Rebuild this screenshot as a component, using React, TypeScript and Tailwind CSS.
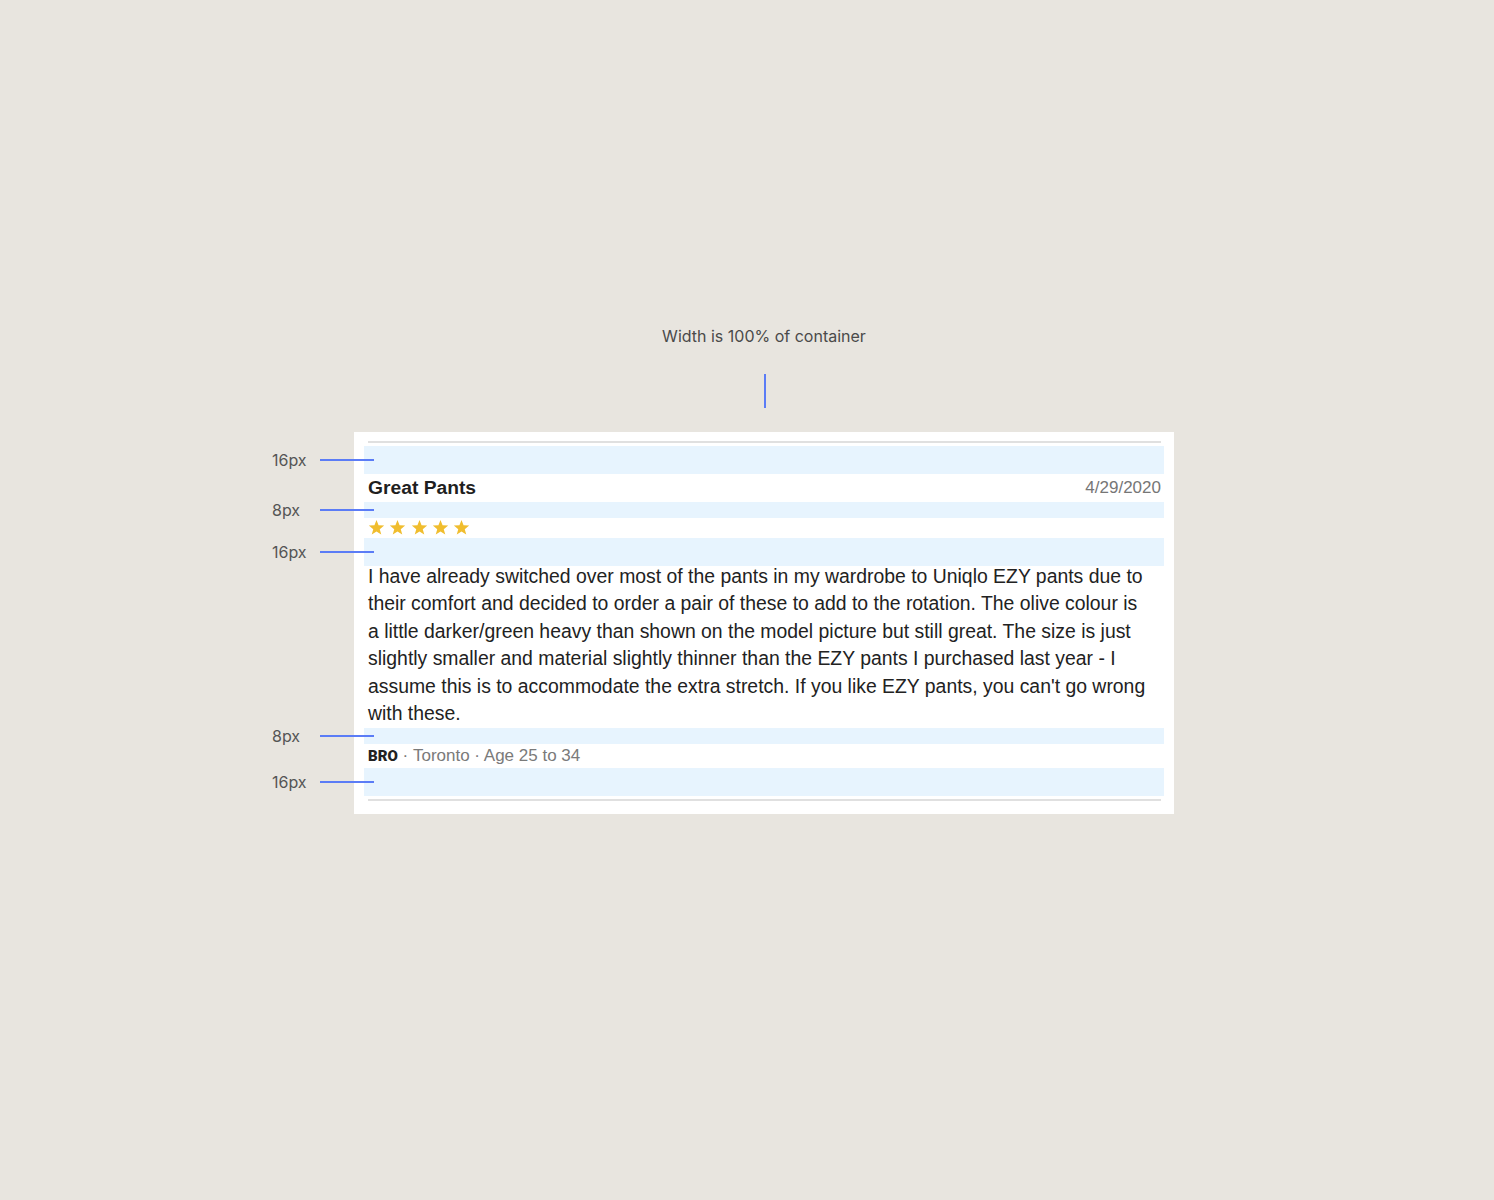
import React from "react";

function Band({ h, label }: { h: string; label: string }) {
  return (
    <div className={`relative ml-[-4px] mr-[-3px] ${h} bg-[#e7f4fe]`}>
      <div className="absolute left-[-92px] top-1/2 flex -translate-y-1/2 items-center">
        <span className="w-[48px] font-['Inter',sans-serif] text-[16px] leading-[20px] text-[#555]">{label}</span>
        <span className="block h-[2px] w-[54px] bg-[#5b7cf6]" />
      </div>
    </div>
  );
}

function Star() {
  return (
    <svg width="17" height="17" viewBox="0 0 24 24" className="block">
      <polygon
        points="12,1.5 14.9,8.9 22.8,9.3 16.6,14.3 18.7,22 12,17.6 5.3,22 7.4,14.3 1.2,9.3 9.1,8.9"
        fill="#f0bd2e"
      />
    </svg>
  );
}

export default function App() {
  return (
    <div className="min-h-[1200px] w-full bg-[#e8e5df] pl-[354px] pt-[326px] font-['Liberation_Sans',Arial,sans-serif]">
      <div className="flex w-[820px] flex-col items-center">
        <div className="font-['Inter',sans-serif] text-[16px] leading-[20px] text-[#4a4a4a]">
          Width is 100% of container
        </div>
        <div className="ml-[2px] mt-[28px] h-[34px] w-[2px] bg-[#5b7cf6]" />
        <div className="mt-[24px] w-full bg-white pb-[13px] pl-[14px] pr-[13px] pt-[9px]">
          <div className="h-[2px] bg-[#e0e0e0]" />
          <div className="mt-[3px]">
            <Band h="h-[28px]" label="16px" />
            <div className="flex h-[28px] items-center justify-between">
              <span className="text-[19.25px] font-bold text-[#1f1f1f]">Great Pants</span>
              <span className="text-[17px] text-[#767676]">4/29/2020</span>
            </div>
            <Band h="h-[16px]" label="8px" />
            <div className="flex h-[20px] items-start gap-[4.3px] pt-[1px]">
              <Star />
              <Star />
              <Star />
              <Star />
              <Star />
            </div>
            <Band h="h-[28px]" label="16px" />
            <div className="h-[162px]">
              <p className="relative -top-[3px] whitespace-nowrap text-[19.4px] leading-[27.4px] text-[#222]">
                I have already switched over most of the pants in my wardrobe to Uniqlo EZY pants due to
                <br />
                their comfort and decided to order a pair of these to add to the rotation. The olive colour is
                <br />
                a little darker/green heavy than shown on the model picture but still great. The size is just
                <br />
                slightly smaller and material slightly thinner than the EZY pants I purchased last year - I
                <br />
                assume this is to accommodate the extra stretch. If you like EZY pants, you can't go wrong
                <br />
                with these.
              </p>
            </div>
            <Band h="h-[16px]" label="8px" />
            <div className="flex h-[24px] items-center text-[17px] text-[#7a7a7a]">
              <span className="font-['Roboto',sans-serif] text-[15px] font-black text-[#222]">BRO</span>
              <span>&nbsp;·&nbsp;Toronto · Age 25 to 34</span>
            </div>
            <Band h="h-[28px]" label="16px" />
          </div>
          <div className="mt-[3px] h-[2px] bg-[#e0e0e0]" />
        </div>
      </div>
    </div>
  );
}
